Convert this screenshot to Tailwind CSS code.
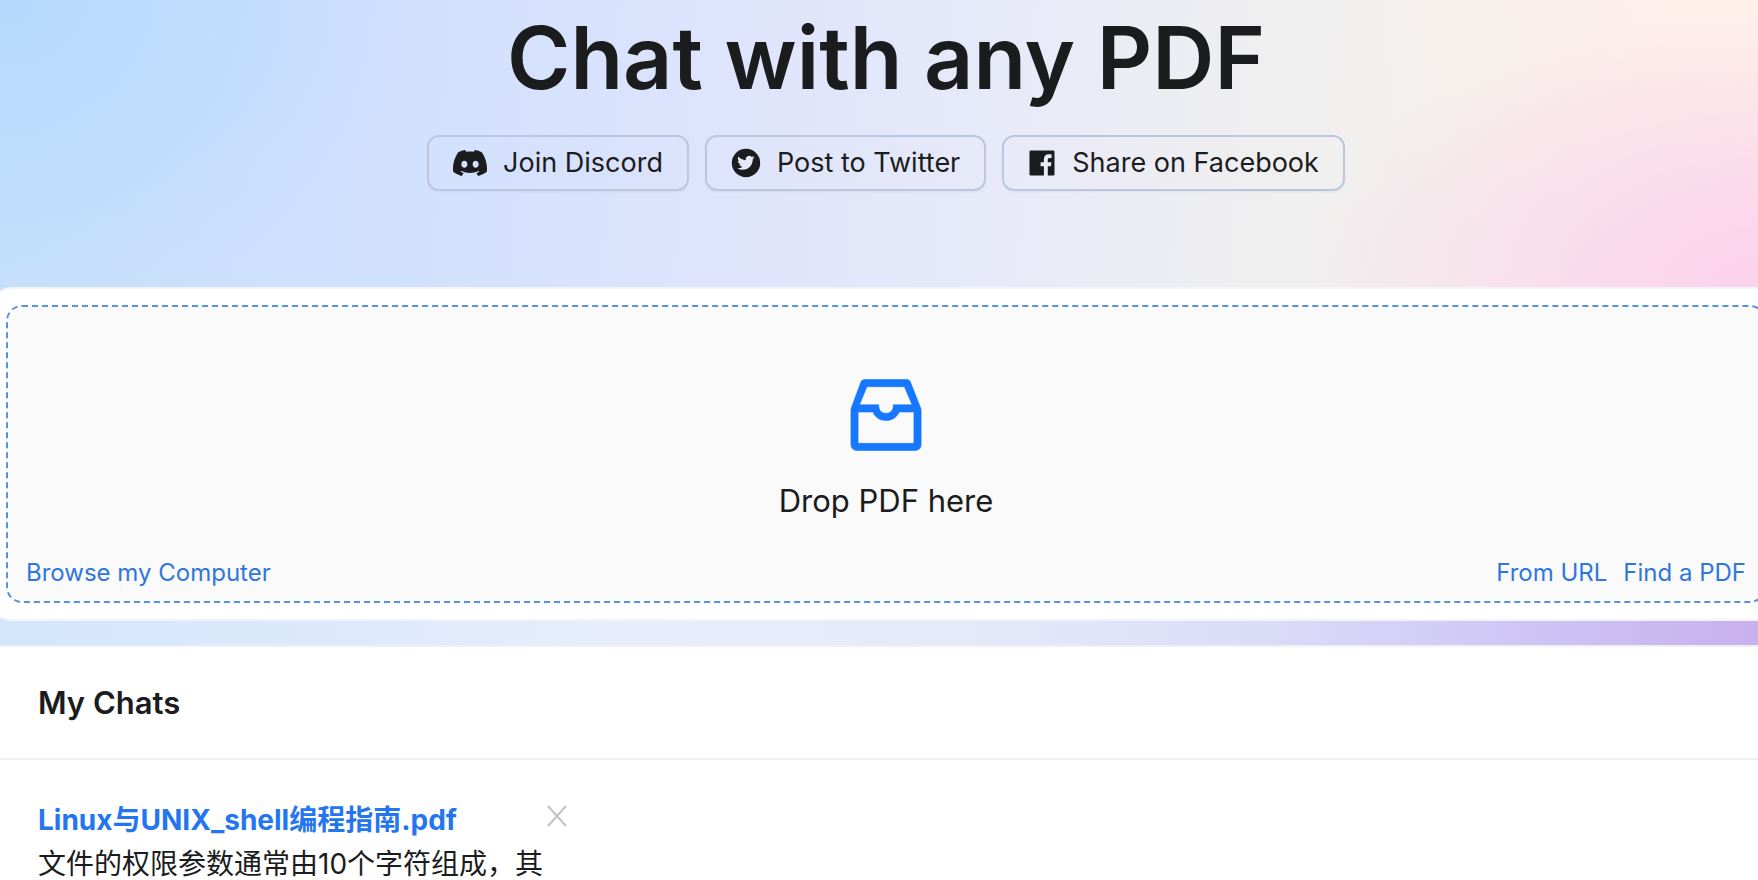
<!DOCTYPE html>
<html lang="en">
<head>
<meta charset="utf-8">
<meta name="viewport" content="width=device-width, initial-scale=1">
<title>Chat with any PDF</title>
<script src="https://cdn.jsdelivr.net/npm/@tailwindcss/browser@4"></script>
</head>
<body class="min-h-screen overflow-x-hidden bg-white font-['Inter','Noto_Sans_CJK_SC',sans-serif] text-[#1b1c1e]">
<div class="overflow-hidden bg-[linear-gradient(90deg,#d3e6fb_0%,#dce9fc_18%,#e7edfc_35%,#e4eafa_55%,#dbdcf8_72%,#cdc3f5_88%,#c8b0ee_100%),radial-gradient(26%_42%_at_100%_44%,#fbd2ec_0%,#fbd6ea99_50%,#fcd6ea00_100%),radial-gradient(24%_50%_at_100%_0%,#fff0ea_0%,#fff1ea00_100%),radial-gradient(24%_50%_at_0%_0%,#b6d9fd_0%,#b5d8fb00_100%),linear-gradient(94deg,#c6e0fb_0%,#cfe0fd_20%,#dce3fc_38%,#e8eaf8_57%,#efeff0_70%,#f3f0ed_82%,#fae6ec_100%)] bg-[length:100%_40px,100%_100%,100%_100%,100%_100%,100%_100%] bg-bottom bg-no-repeat">
  <main class="-mr-[26px] -ml-3 flex flex-col pb-6">
    <header class="flex flex-col items-center">
      <h1 class="pt-1 text-[86px] leading-[108px] font-semibold">Chat with any PDF</h1>
      <div class="mt-[23px] flex gap-4">
        <button type="button" class="flex h-14 items-center gap-4 rounded-xl border-2 border-[#bcc6df] px-6 text-[27px] shadow-xs">
          <svg class="size-[34px]" viewBox="0 0 24 24" fill="currentColor" aria-hidden="true"><path d="M20.317 4.3698a19.7913 19.7913 0 00-4.8851-1.5152.0741.0741 0 00-.0785.0371c-.211.3753-.4447.8648-.6083 1.2495-1.8447-.2762-3.68-.2762-5.4868 0-.1636-.3933-.4058-.8742-.6177-1.2495a.077.077 0 00-.0785-.037 19.7363 19.7363 0 00-4.8852 1.515.0699.0699 0 00-.0321.0277C.5334 9.0458-.319 13.5799.0992 18.0578a.0824.0824 0 00.0312.0561c2.0528 1.5076 4.0413 2.4228 5.9929 3.0294a.0777.0777 0 00.0842-.0276c.4616-.6304.8731-1.2952 1.226-1.9942a.076.076 0 00-.0416-.1057c-.6528-.2476-1.2743-.5495-1.8722-.8923a.077.077 0 01-.0076-.1277c.1258-.0943.2517-.1923.3718-.2914a.0743.0743 0 01.0776-.0105c3.9278 1.7933 8.18 1.7933 12.0614 0a.0739.0739 0 01.0785.0095c.1202.099.246.1981.3728.2924a.077.077 0 01-.0066.1276 12.2986 12.2986 0 01-1.873.8914.0766.0766 0 00-.0407.1067c.3604.698.7719 1.3628 1.225 1.9932a.076.076 0 00.0842.0286c1.961-.6067 3.9495-1.5219 6.0023-3.0294a.077.077 0 00.0313-.0552c.5004-5.177-.8382-9.6739-3.5485-13.6604a.061.061 0 00-.0312-.0286zM8.02 15.3312c-1.1825 0-2.1569-1.0857-2.1569-2.419 0-1.3332.9555-2.4189 2.157-2.4189 1.2108 0 2.1757 1.0952 2.1568 2.419 0 1.3332-.9555 2.4189-2.1569 2.4189zm7.9748 0c-1.1825 0-2.1569-1.0857-2.1569-2.419 0-1.3332.9554-2.4189 2.1569-2.4189 1.2108 0 2.1757 1.0952 2.1568 2.419 0 1.3332-.946 2.4189-2.1568 2.4189Z"/></svg>
          Join Discord
        </button>
        <button type="button" class="flex h-14 items-center gap-4 rounded-xl border-2 border-[#bcc6df] px-6 text-[27px] shadow-xs">
          <svg class="size-[30px]" viewBox="0 0 30 30" aria-hidden="true"><circle cx="15" cy="15" r="14.2" fill="currentColor"/><path fill="#e6e8fa" transform="translate(6.2 6.200) scale(.72)" d="M23.953 4.57a10 10 0 01-2.825.775 4.958 4.958 0 002.163-2.723c-.951.555-2.005.959-3.127 1.184a4.92 4.92 0 00-8.384 4.482C7.69 8.095 4.067 6.13 1.64 3.162a4.822 4.822 0 00-.666 2.475c0 1.71.87 3.213 2.188 4.096a4.904 4.904 0 01-2.228-.616v.06a4.923 4.923 0 003.946 4.827 4.996 4.996 0 01-2.212.085 4.936 4.936 0 004.604 3.417 9.867 9.867 0 01-6.102 2.105c-.39 0-.779-.023-1.17-.067a13.995 13.995 0 007.557 2.209c9.053 0 13.998-7.496 13.998-13.985 0-.21 0-.42-.015-.63A9.935 9.935 0 0024 4.59z"/></svg>
          Post to Twitter
        </button>
        <button type="button" class="flex h-14 items-center gap-4 rounded-xl border-2 border-[#bcc6df] px-6 text-[27px] shadow-xs">
          <svg class="size-7" viewBox="0 0 28 28" fill="currentColor" aria-hidden="true"><path d="M2.8 1.500h22.400q1.300 0 1.300 1.300v22.400q0 1.300-1.300 1.300h-5.400v-9.300h3.100l.5-3.900h-3.600v-2.400c0-1.100.4-1.800 1.900-1.800h1.900V5.500c-.4-.1-1.500-.2-2.800-.2-3 0-4.900 1.800-4.900 5v3h-3.300v3.900h3.300v9.300H2.800q-1.300 0-1.300-1.300V2.800q0-1.300 1.300-1.300z"/></svg>
          Share on Facebook
        </button>
      </div>
    </header>
    <section class="mt-24 rounded-3xl border-2 border-[#f3f4f8] bg-white p-4">
      <div class="flex flex-col rounded-2xl border-2 border-dashed border-[#5594dc] bg-[#fafafa] px-[18px] pt-[60px] pb-3">
        <div class="flex flex-col items-center">
          <svg class="size-24" viewBox="0 0 1024 1024" fill="#1677ff" aria-hidden="true"><path stroke="#1677ff" stroke-width="6" d="M885.2 446.3l-.2-.8-112.2-285.1c-5-16.1-19.9-27.2-36.8-27.2H281.2c-17 0-32.1 11.3-36.9 27.6L139.4 443l-.3.7-.2.8c-1.3 4.9-1.7 9.900-1 14.800-.1 1.600-.2 3.200-.2 4.800V830a60.900 60.900 0 0060.800 60.800h627.200c33.500 0 60.800-27.300 60.900-60.800V464.100c0-1.300 0-2.600-.1-3.700.4-4.900 0-9.600-1.300-14.100zm-295.800-43l-.3 15.700c-.8 44.900-31.800 75.100-77.100 75.100-22.100 0-41.100-7.100-54.800-20.600S436 441.200 435.600 419l-.3-15.700H229.500L309 210h399.200l81.700 193.300H589.400zm-375 76.800h157.300c24.300 57.100 76 90.800 140.400 90.800 33.700 0 65-9.400 90.300-27.200 22.200-15.600 39.500-37.400 50.700-63.600h156.500V814H214.400V480.100z"/></svg>
          <p class="mt-[14px] text-[31px] leading-[48px]">Drop PDF here</p>
        </div>
        <div class="mt-8 flex justify-between text-2xl text-[#2f77dc]">
          <a href="#">Browse my Computer</a>
          <div class="flex gap-4"><a href="#">From URL</a><a href="#">Find a PDF</a></div>
        </div>
      </div>
    </section>
  </main>
</div>
<section class="border-t-2 border-[#f0f0f3] bg-white">
  <h2 class="border-b-2 border-[#f0f0f0] px-[38px] py-8 text-[31px] leading-[47px] font-semibold">My Chats</h2>
  <ul class="px-[38px] py-[38px]">
    <li class="flex text-[28px] leading-[44px]">
      <div>
        <a href="#" class="block font-bold text-[#2376f0]">Linux与UNIX_shell编程指南.pdf</a>
        <p>文件的权限参数通常由10个字符组成，其</p>
      </div>
      <button type="button" aria-label="Delete chat" class="mt-1 flex size-7 items-center justify-center self-start text-[#c3c3c3]">
        <svg class="size-6" viewBox="0 0 24 24" fill="none" stroke="currentColor" stroke-width="2" aria-hidden="true"><path d="M3 2l18 20M21 2L3 22"/></svg>
      </button>
    </li>
  </ul>
</section>
</body>
</html>
